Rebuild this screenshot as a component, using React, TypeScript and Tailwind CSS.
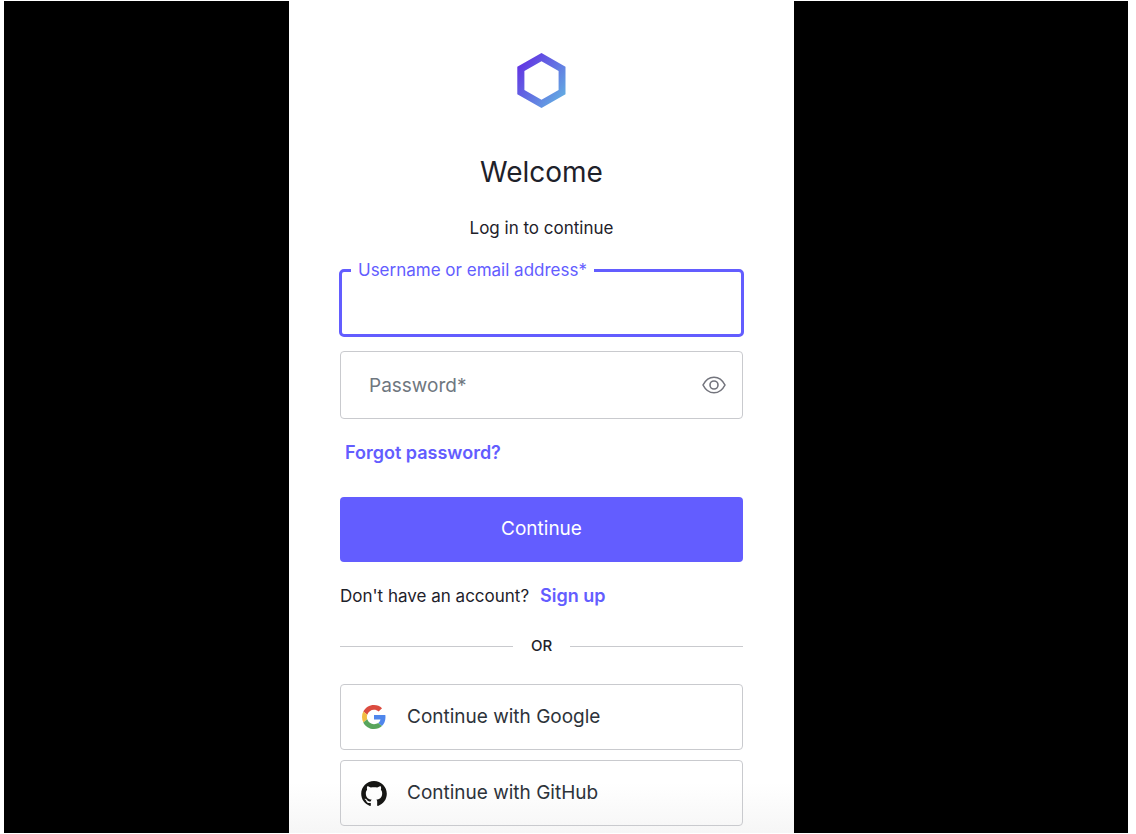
function Logo() {
  return (
    <svg viewBox="0 0 49 55" className="h-[55px] w-[49px]" role="img" aria-label="Logo">
      <defs>
        <linearGradient id="hex" x1="0" y1="8" x2="49" y2="47" gradientUnits="userSpaceOnUse">
          <stop offset="0.05" stopColor="#6233e3" />
          <stop offset="1" stopColor="#63b3e2" />
        </linearGradient>
      </defs>
      <path
        fill="url(#hex)"
        fillRule="evenodd"
        d="M24.5 0 48.5 13.8V41.2L24.5 55 .3 41.2V13.8ZM24.5 8.3 7.4 18V37L24.5 46.7 41.6 37V18Z"
      />
    </svg>
  );
}

function GoogleIcon() {
  return (
    <svg viewBox="0 0 48 48" className="h-6 w-6" aria-hidden="true">
      <path fill="#DB4B3F" d="M24 9.5c3.54 0 6.71 1.22 9.21 3.6l6.85-6.85C35.9 2.38 30.47 0 24 0 14.62 0 6.51 5.38 2.56 13.22l7.98 6.19C12.43 13.72 17.74 9.5 24 9.5z" />
      <path fill="#4F86EC" d="M46.98 24.55c0-1.57-.15-3.09-.38-4.55H24v9.02h12.94c-.58 2.96-2.26 5.48-4.78 7.18l7.73 6c4.51-4.18 7.09-10.36 7.09-17.65z" />
      <path fill="#F2BD42" d="M10.53 28.59c-.48-1.45-.76-2.99-.76-4.59s.27-3.14.76-4.59l-7.98-6.19C.92 16.46 0 20.12 0 24c0 3.88.92 7.54 2.56 10.78l7.97-6.19z" />
      <path fill="#58A55C" d="M24 48c6.48 0 11.93-2.13 15.89-5.81l-7.73-6c-2.15 1.45-4.92 2.3-8.16 2.3-6.26 0-11.57-4.22-13.47-9.91l-7.98 6.19C6.51 42.62 14.62 48 24 48z" />
    </svg>
  );
}

function GitHubIcon() {
  return (
    <svg viewBox="0 0 256 250" className="h-[25px] w-[26px]" fill="#161614" aria-hidden="true">
      <path d="M128.001 0C57.317 0 0 57.307 0 128.001c0 56.554 36.676 104.535 87.535 121.46 6.397 1.185 8.746-2.777 8.746-6.158 0-3.052-.12-13.135-.174-23.83-35.61 7.742-43.124-15.103-43.124-15.103-5.823-14.795-14.213-18.73-14.213-18.73-11.613-7.944.876-7.78.876-7.78 12.853.902 19.621 13.19 19.621 13.19 11.417 19.568 29.945 13.911 37.249 10.64 1.149-8.272 4.466-13.92 8.127-17.116-28.431-3.236-58.318-14.212-58.318-63.258 0-13.975 5-25.394 13.188-34.358-1.329-3.224-5.71-16.242 1.24-33.874 0 0 10.749-3.44 35.21 13.121 10.21-2.836 21.16-4.258 32.038-4.307 10.878.049 21.837 1.47 32.066 4.307 24.431-16.56 35.165-13.12 35.165-13.12 6.967 17.63 2.584 30.65 1.255 33.873 8.207 8.964 13.173 20.383 13.173 34.358 0 49.163-29.944 59.988-58.447 63.157 4.591 3.972 8.682 11.762 8.682 23.704 0 17.126-.148 30.91-.148 35.126 0 3.407 2.304 7.398 8.792 6.14C219.37 232.5 256 184.537 256 128.002 256 57.307 198.691 0 128.001 0z" />
    </svg>
  );
}

function EyeIcon() {
  return (
    <svg viewBox="0 0 24 18" className="h-[18px] w-6" fill="none" stroke="#73747d" strokeWidth="1.6" aria-hidden="true">
      <path strokeLinejoin="round" d="M1 9C3.600 3.900 7.400 1.200 12 1.200S20.400 3.900 23 9C20.400 14.100 16.600 16.800 12 16.800S3.600 14.100 1 9Z" />
      <circle cx="12" cy="9" r="4" />
    </svg>
  );
}

const socialClass =
  "flex h-[66px] w-full items-center rounded border border-[#c9cace] pl-5 text-left text-[19px] text-[#2d333a]";

export default function App() {
  return (
    <div className="min-h-screen bg-white pt-px pr-2 pb-px pl-1 font-['Inter',sans-serif]">
      <div className="grid min-h-[calc(100vh-2px)] grid-cols-[285fr_minmax(0,505px)_334fr] bg-black">
        <main className="col-start-2 bg-white bg-[linear-gradient(to_top,#f6f6f6,#ffffff_50px)] px-[51px] pt-[52px] pb-[7px] text-[#1e212a]">
          <div className="flex justify-center">
            <Logo />
          </div>
          <h1 className="mt-[46px] text-center text-[28px] leading-9">Welcome</h1>
          <p className="mt-[26px] text-center text-[17px] leading-6">Log in to continue</p>

          <form onSubmit={(e) => e.preventDefault()}>
            <div className="relative -mx-px mt-[29px]">
              <input
                id="username"
                type="text"
                className="block h-[68px] w-full rounded-[5px] border-3 border-[#635dff] px-7 text-[19px] outline-none"
              />
              <label
                htmlFor="username"
                className="absolute -top-[11px] left-3 bg-white px-[7px] text-[17px] leading-6 text-[#635dff]"
              >
                Username or email address*
              </label>
            </div>

            <div className="mt-[14px] flex h-[68px] items-center rounded border border-[#c9cace] pr-4 pl-7">
              <input
                type="password"
                aria-label="Password"
                placeholder="Password*"
                className="h-full min-w-0 flex-1 text-[19px] outline-none placeholder:text-[#6f7780]"
              />
              <button type="button" aria-label="Show password">
                <EyeIcon />
              </button>
            </div>

            <a href="#forgot" className="mt-[22px] ml-[5px] block w-fit text-[18px] leading-6 font-semibold text-[#635dff]">
              Forgot password?
            </a>

            <button type="submit" className="mt-8 h-[65px] w-full rounded bg-[#635dff] text-[19px] text-white">
              Continue
            </button>
          </form>

          <p className="mt-[22px] text-[17px] leading-6">
            Don't have an account?
            <a href="#signup" className="ml-[11px] text-[18px] font-semibold text-[#635dff]">
              Sign up
            </a>
          </p>

          <div className="mt-[26px] flex items-center gap-[18px] text-[15px] leading-6 font-medium">
            <span className="h-px flex-1 bg-[#c9cace]" />
            OR
            <span className="h-px flex-1 bg-[#c9cace]" />
          </div>

          <div className="mt-[26px] flex flex-col gap-[10px]">
            <button type="button" className={socialClass}>
              <span className="mr-5 flex w-[26px] justify-center">
                <GoogleIcon />
              </span>
              Continue with Google
            </button>
            <button type="button" className={socialClass}>
              <span className="mr-5 flex w-[26px] justify-center">
                <GitHubIcon />
              </span>
              Continue with GitHub
            </button>
          </div>
        </main>
      </div>
    </div>
  );
}
